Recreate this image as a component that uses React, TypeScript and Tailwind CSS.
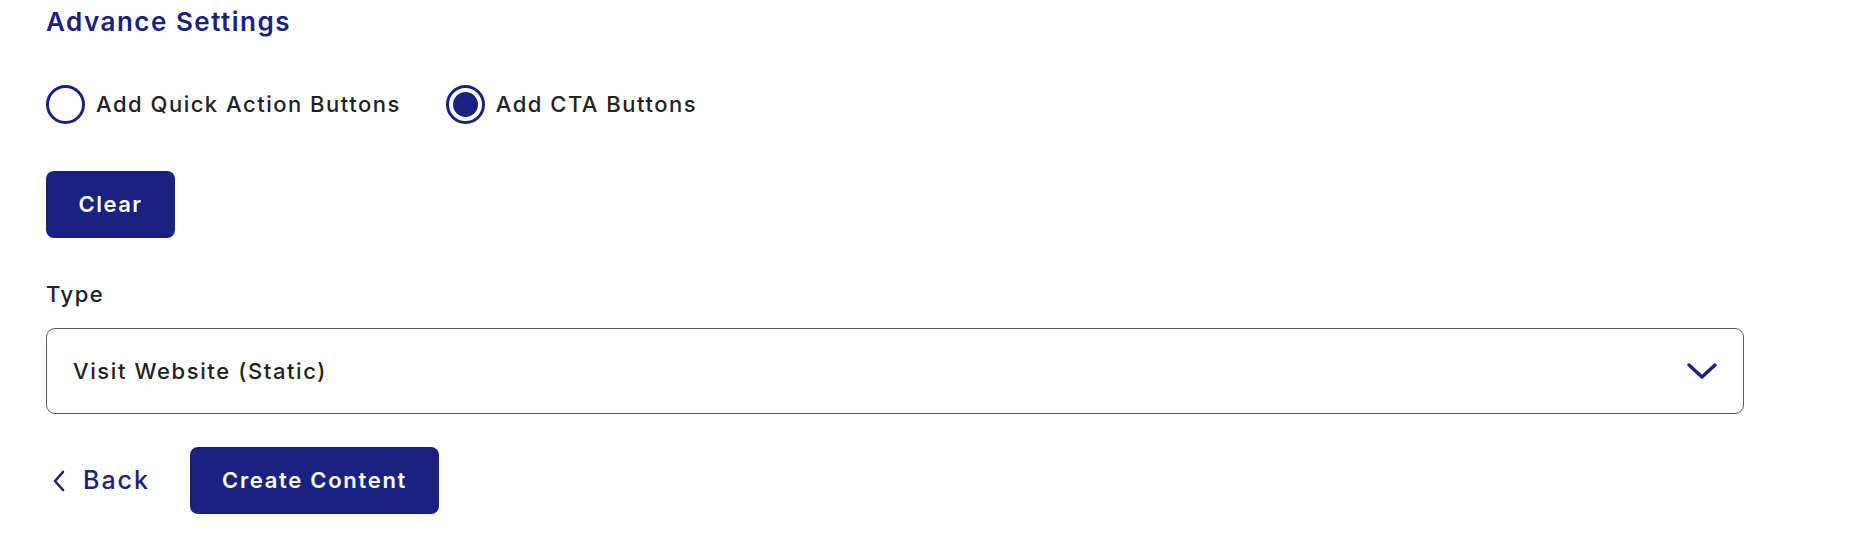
import { useState } from "react";

const NAVY = "#1a2181";

function Radio({ checked, label, onClick }: { checked: boolean; label: string; onClick: () => void }) {
  return (
    <button onClick={onClick} className="flex items-center gap-[11px] h-[40px]">
      <span className="w-[39px] h-[39px] rounded-full border-[3.5px] border-[#1a2181] flex items-center justify-center">
        {checked && <span className="w-[25px] h-[25px] rounded-full bg-[#1a2181]" />}
      </span>
      <span className="text-[22px] tracking-[1.5px] font-medium text-[#222222]">{label}</span>
    </button>
  );
}

export default function App() {
  const [mode, setMode] = useState<"quick" | "cta">("cta");

  return (
    <div className="min-h-[538px] bg-white pl-[46px] font-['Inter',sans-serif]">
      <div className="flex flex-col items-start w-[1698px]">
        <h2 className="mt-[6px] text-[26px] tracking-[1.5px] leading-[32px] font-semibold text-[#1a2181]">Advance Settings</h2>

        <div className="mt-[46px] flex items-center gap-[45px]">
          <Radio checked={mode === "quick"} label="Add Quick Action Buttons" onClick={() => setMode("quick")} />
          <Radio checked={mode === "cta"} label="Add CTA Buttons" onClick={() => setMode("cta")} />
        </div>

        <button
          onClick={() => setMode("quick")}
          className="mt-[47px] h-[67px] w-[129px] rounded-[8px] bg-[#1a2181] text-white text-[22px] tracking-[1.5px] font-semibold"
        >
          Clear
        </button>

        <label className="mt-[42px] text-[22px] tracking-[1.5px] leading-[28px] font-medium text-[#222222]">Type</label>

        <div className="mt-[20px] h-[86px] w-full rounded-[9px] border-[1.5px] border-[#5a5a5a] flex items-center justify-between pl-[26px] pr-[25px]">
          <span className="text-[22px] tracking-[1.6px] font-medium text-[#222222]">Visit Website (Static)</span>
          <svg width="32" height="18" viewBox="0 0 32 18" fill="none">
            <path d="M3 3 L16 15 L29 3" stroke={NAVY} strokeWidth="3.5" strokeLinecap="round" strokeLinejoin="round" />
          </svg>
        </div>

        <div className="mt-[33px] flex items-center h-[67px]">
          <button className="flex items-center pl-[6px] gap-[17px] text-[#1a2181]">
            <svg width="14" height="22" viewBox="0 0 14 22" fill="none">
              <path d="M11 2 L3 11 L11 20" stroke={NAVY} strokeWidth="2.6" strokeLinecap="round" strokeLinejoin="round" />
            </svg>
            <span className="text-[25px] tracking-[2px] font-medium">Back</span>
          </button>
          <button className="ml-[40px] h-[67px] w-[249px] rounded-[8px] bg-[#1a2181] text-white text-[22px] tracking-[1.7px] font-semibold">
            Create Content
          </button>
        </div>
      </div>
    </div>
  );
}
